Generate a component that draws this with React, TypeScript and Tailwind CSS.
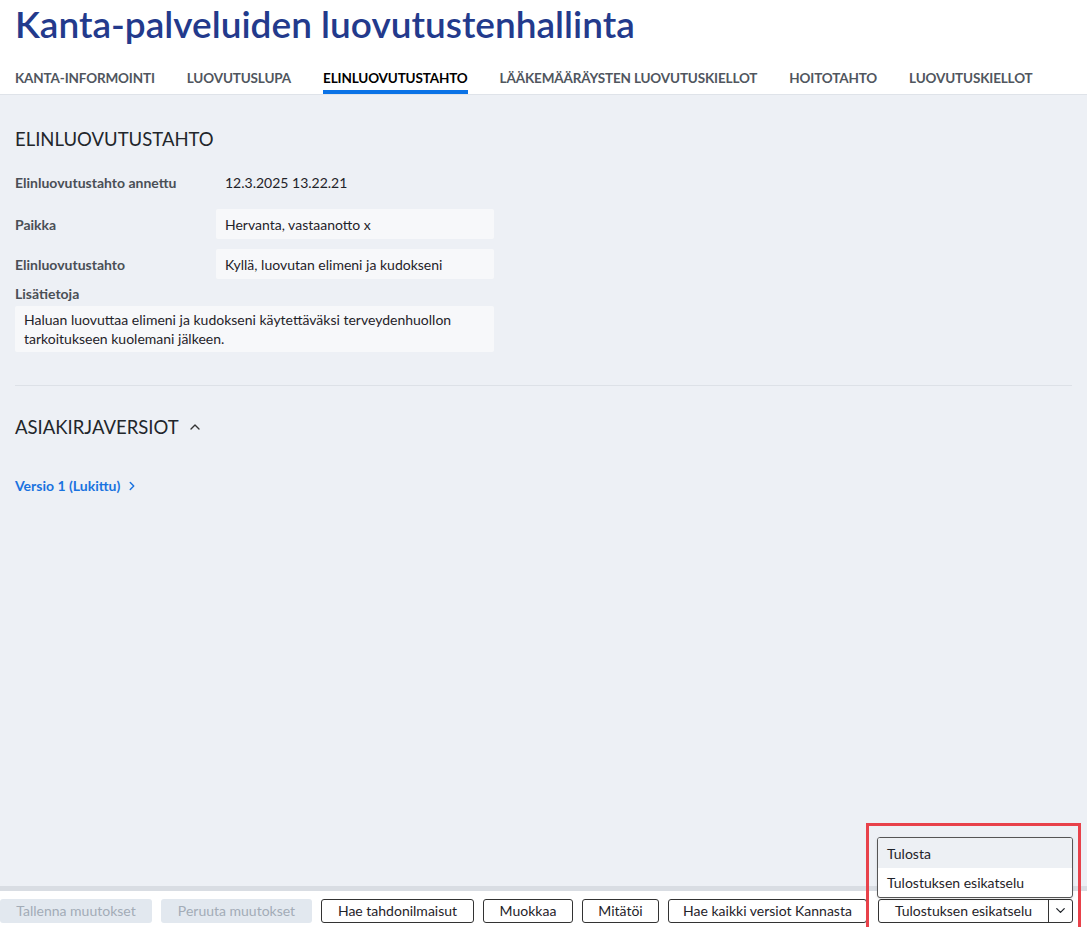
import { ChevronDown, ChevronRight, ChevronUp } from "lucide-react";

const tabs = [
  "KANTA-INFORMOINTI",
  "LUOVUTUSLUPA",
  "ELINLUOVUTUSTAHTO",
  "LÄÄKEMÄÄRÄYSTEN LUOVUTUSKIELLOT",
  "HOITOTAHTO",
  "LUOVUTUSKIELLOT",
];

export default function App() {
  return (
    <div
      className="relative flex h-[927px] flex-col overflow-hidden bg-[#edf0f5] text-[#1f2329]"
      style={{ fontFamily: 'Lato, "Noto Sans", sans-serif' }}
    >
      {/* Header */}
      <header className="border-b border-[#dfe3e9] bg-white px-[15px]">
        <h1 className="pt-[1px] text-[37px] leading-[46px] font-semibold text-[#233a8c]">
          Kanta-palveluiden luovutustenhallinta
        </h1>
        <nav className="mt-[19px] flex gap-8 whitespace-nowrap">
          {tabs.map((t, i) => (
            <div
              key={t}
              className={
                i === 2
                  ? "border-b-[4px] border-[#0a72e6] text-[13.5px] leading-[24px] font-bold tracking-[-0.15px] text-black"
                  : "border-b-[4px] border-transparent text-[13.5px] leading-[24px] font-bold tracking-[-0.15px] text-[#50565e]"
              }
            >
              {t}
            </div>
          ))}
        </nav>
      </header>

      {/* Main */}
      <main className="flex-1 px-[15px] pt-[29px]">
        <h2 className="text-[18.5px] leading-[30px] text-[#22262b]">ELINLUOVUTUSTAHTO</h2>

        <div className="mt-[18px] flex w-[479px] flex-col gap-[10px] text-[14px]">
          <div className="flex items-center">
            <div className="w-[201px] font-bold text-[#4a4f56]">Elinluovutustahto annettu</div>
            <div className="px-[9px] leading-[20px]">12.3.2025 13.22.21</div>
          </div>
          <div className="mt-[6px] flex items-center">
            <div className="w-[201px] font-bold text-[#4a4f56]">Paikka</div>
            <div className="flex h-[30px] flex-1 items-center rounded-[2px] bg-[#f7f8fa] px-[9px]">
              Hervanta, vastaanotto x
            </div>
          </div>
          <div className="flex items-center">
            <div className="w-[201px] font-bold text-[#4a4f56]">Elinluovutustahto</div>
            <div className="flex h-[30px] flex-1 items-center rounded-[2px] bg-[#f7f8fa] px-[9px]">
              Kyllä, luovutan elimeni ja kudokseni
            </div>
          </div>
          <div className="-mt-[6px]">
            <div className="leading-[22px] font-bold text-[#4a4f56]">Lisätietoja</div>
            <div className="mt-[1px] rounded-[2px] bg-[#f7f8fa] px-[9px] py-[4px] leading-[19px]">
              Haluan luovuttaa elimeni ja kudokseni käytettäväksi terveydenhuollon tarkoitukseen kuolemani jälkeen.
            </div>
          </div>
        </div>

        <div className="mt-[33px] h-px bg-[#dde1e7]" />

        <div className="mt-[26px] flex items-center gap-[8px]">
          <h2 className="text-[18.5px] leading-[30px] text-[#22262b]">ASIAKIRJAVERSIOT</h2>
          <ChevronUp size={16} strokeWidth={2} className="text-[#333]" />
        </div>

        <a className="mt-[33px] flex items-center gap-[5px] text-[14px] font-bold text-[#1a73e0]">
          Versio 1 (Lukittu)
          <ChevronRight size={14} strokeWidth={2.5} />
        </a>
      </main>

      {/* Footer */}
      <footer className="flex h-[41px] items-center gap-[9px] border-t-[5px] border-[#d9dde3] bg-white pt-[3px] text-[14px]">
        <button className="h-[24px] w-[152px] rounded-[3px] bg-[#e2e8ef] text-[#a3acb7]">Tallenna muutokset</button>
        <button className="h-[24px] w-[151px] rounded-[3px] bg-[#e2e8ef] text-[#a3acb7]">Peruuta muutokset</button>
        <button className="h-[24px] w-[153px] rounded-[3px] border border-[#333] bg-white">Hae tahdonilmaisut</button>
        <button className="h-[24px] w-[90px] rounded-[3px] border border-[#333] bg-white">Muokkaa</button>
        <button className="h-[24px] w-[77px] rounded-[3px] border border-[#333] bg-white">Mitätöi</button>
        <button className="h-[24px] w-[199px] rounded-[3px] border border-[#333] bg-white">Hae kaikki versiot Kannasta</button>
        <div className="ml-[2px] flex h-[24px] w-[195px] rounded-[3px] border border-[#333] bg-white">
          <span className="flex flex-1 items-center justify-center border-r border-[#333]">Tulostuksen esikatselu</span>
          <span className="flex w-[23px] items-center justify-center">
            <ChevronDown size={15} strokeWidth={2} />
          </span>
        </div>
      </footer>

      {/* Dropdown menu */}
      <div className="absolute top-[837px] left-[877px] w-[196px] overflow-hidden rounded-[3px] border border-[#555] bg-white text-[14px] shadow-sm">
        <div className="flex h-[30px] items-center bg-[#edf0f4] px-[9px]">Tulosta</div>
        <div className="flex h-[29px] items-center px-[9px]">Tulostuksen esikatselu</div>
      </div>

      {/* Highlight */}
      <div className="pointer-events-none absolute top-[823px] left-[866px] h-[110px] w-[215px] border-[3px] border-[#e8414a]" />
    </div>
  );
}
